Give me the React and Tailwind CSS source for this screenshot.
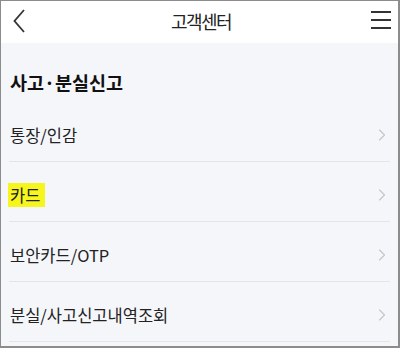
import { ChevronRight } from 'lucide-react';

const items = ['통장/인감', '카드', '보안카드/OTP', '분실/사고신고내역조회'];

const App = () => {
  return (
    <div
      className="w-[400px] h-[348px] overflow-hidden border border-[#8c8c8c] border-r-2 border-b-2 bg-[#f5f6fa] flex flex-col"
      style={{ fontFamily: '"Noto Sans CJK KR", "Noto Sans", sans-serif' }}
    >
      <div className="h-[42px] shrink-0 bg-white flex items-center justify-between pl-[12px] pr-[8px]">
        <svg width="12" height="24" viewBox="0 0 12 24" className="text-[#333] mt-[-2px]">
          <polyline points="11,1 1.5,12 11,23" fill="none" stroke="currentColor" strokeWidth="1.8" />
        </svg>
        <span className="text-[18px] tracking-[-1.5px] text-[#222] leading-none ml-[6px] mt-[-2px]">고객센터</span>
        <div className="w-[20px] flex flex-col gap-[6px] mr-[-1px] mt-[-4px]">
          <span className="block h-[2px] bg-[#333]" />
          <span className="block h-[2px] bg-[#333]" />
          <span className="block h-[2px] bg-[#333]" />
        </div>
      </div>

      <div className="px-[8px]">
        <h2 className="pl-[1px] pt-[25px] pb-[6px] text-[18.5px] font-bold text-[#111] leading-[28px]">사고·분실신고</h2>
        {items.map((label) => (
          <div key={label} className="h-[60px] flex items-center justify-between border-b border-[#e3e4e8]">
            <span
              className={`text-[16.5px] text-[#222] leading-[22px] mt-[6px] ${
                label === '카드' ? 'bg-[#f7f51e] pl-[2px] pr-[5px] py-[1px] -ml-[1px]' : 'pl-[1px]'
              }`}
            >
              {label}
            </span>
            <ChevronRight className="w-[20px] h-[22px] text-[#c4c4c8] mr-[-2px] mt-[6px]" strokeWidth={1.3} />
          </div>
        ))}
      </div>
    </div>
  );
};

export default App;
